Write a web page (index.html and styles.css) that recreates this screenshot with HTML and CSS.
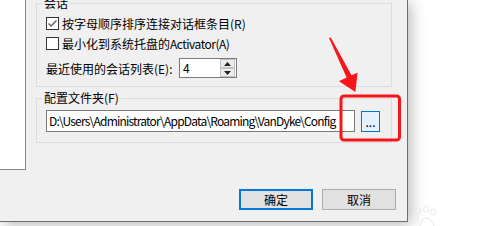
FILE: index.html
```html
<!DOCTYPE html>
<html lang="zh-CN">
<head>
<meta charset="utf-8">
<title>选项</title>
<link rel="stylesheet" href="styles.css">
</head>
<body>
<div class="screen">
  <div class="dialog">
    <div class="sidebar"></div>
    <div class="main">
      <div class="group g1">
        <div class="legend">会话</div>
        <div class="check-row">
          <span class="box"><svg width="11" height="11" viewBox="0 0 11 11"><polyline points="1.5,5.5 4,8 9.5,2.5" fill="none" stroke="#5c5c5c" stroke-width="1.3"/></svg></span>
          <span>按字母顺序排序连接对话框条目(R)</span>
        </div>
        <div class="check-row">
          <span class="box"></span>
          <span>最小化到系统托盘的<span class="latin">Activator(A)</span></span>
        </div>
        <div class="spin-row">
          <span class="spin-label">最近使用的会话列表(E):</span>
          <div class="spin">
            <span class="spin-value">4</span>
            <div class="spin-btns">
              <span class="spin-btn"><svg width="7" height="4" viewBox="0 0 7 4"><polygon points="0,4 7,4 3.5,0" fill="#222"/></svg></span>
              <span class="spin-btn"><svg width="7" height="4" viewBox="0 0 7 4"><polygon points="0,0 7,0 3.5,4" fill="#222"/></svg></span>
            </div>
          </div>
        </div>
      </div>
      <div class="group g2">
        <div class="legend">配置文件夹(F)</div>
        <div class="path-row">
          <div class="path-input">D:\Users\Administrator\AppData\Roaming\VanDyke\Config</div>
          <div class="browse">...</div>
        </div>
      </div>
      <div class="actions">
        <div class="btn btn-default">确定</div>
        <div class="btn">取消</div>
      </div>
    </div>
  </div>
  <svg class="overlay" width="500" height="226" viewBox="0 0 500 226">
    <rect x="341" y="96" width="58.5" height="44" rx="3" fill="none" stroke="#f5151b" stroke-width="3"/>
    <polygon points="329,38 330.8,37.6 351.5,75.3 357.5,72.8 355.4,92 339,81.2 346.6,77.6" fill="#f5151b"/>
    <g class="paw" fill="none" stroke="#ececec" stroke-width="1.2">
      <ellipse cx="418" cy="211" rx="2.5" ry="3"/>
      <ellipse cx="426" cy="209" rx="2.5" ry="3"/>
      <ellipse cx="433" cy="212" rx="2.5" ry="3"/>
      <ellipse cx="416" cy="219" rx="2.5" ry="3"/>
      <path d="M420,226 q2,-8 6,-8 q5,0 8,8"/>
    </g>
  </svg>
</div>
</body>
</html>
```

FILE: styles.css
```css
* {
  box-sizing: border-box;
}

body {
  margin: 0;
  background: #ffffff;
  color: #000000;
  font-family: "Noto Sans CJK SC", sans-serif;
  font-size: 12px;
}

.screen {
  position: relative;
  width: 500px;
  height: 226px;
  overflow: hidden;
}

.dialog {
  display: flex;
  width: 408px;
  height: 222px;
  background: #f0f0f0;
  border-right: 1px solid #6e6e6e;
  border-bottom: 1px solid #6e6e6e;
  box-shadow: 3px 3px 14px rgba(0, 0, 0, 0.28);
}

.sidebar {
  flex: none;
  width: 26px;
  height: 170px;
  background: #ffffff;
  border-right: 1px solid #828790;
  border-bottom: 1px solid #828790;
}

.main {
  display: flex;
  flex-direction: column;
  padding: 3px 0 0 10px;
}

.group {
  display: flex;
  flex-direction: column;
  width: 356px;
  border: 1px solid #dcdcdc;
  padding-left: 9px;
}

.g1 {
  height: 84px;
}

.g2 {
  height: 45px;
  margin-top: 11px;
}

.legend {
  align-self: flex-start;
  height: 14px;
  line-height: 14px;
  margin: -8px 0 3px -4px;
  padding: 0 2px;
  background: #f0f0f0;
  white-space: nowrap;
}

.check-row {
  display: flex;
  align-items: center;
  gap: 3px;
  height: 20px;
  white-space: nowrap;
}

.latin {
  letter-spacing: -0.5px;
}

.box {
  display: flex;
  flex: none;
  width: 13px;
  height: 13px;
  border: 1px solid #333333;
  background: #ffffff;
}

.spin-row {
  display: flex;
  align-items: center;
  height: 20px;
  margin-top: 5px;
  white-space: nowrap;
}

.spin-label {
  width: 133px;
}

.spin {
  display: flex;
  width: 58px;
  height: 20px;
  border: 1px solid #7a7a7a;
  background: #ffffff;
}

.spin-value {
  flex: 1;
  padding-left: 3px;
  line-height: 18px;
}

.spin-btns {
  display: flex;
  flex-direction: column;
  width: 16px;
  padding: 0 1px 0 0;
}

.spin-btn {
  display: flex;
  flex: 1;
  align-items: center;
  justify-content: center;
  background: #ececec;
  border: 1px solid #c2c2c2;
}

.path-row {
  display: flex;
  align-items: flex-start;
  gap: 6px;
  margin-top: 2px;
}

.path-input {
  width: 309px;
  height: 22px;
  padding-left: 2px;
  border: 1px solid #7a7a7a;
  background: #ffffff;
  line-height: 20px;
  letter-spacing: -0.8px;
  white-space: nowrap;
  overflow: hidden;
}

.browse {
  width: 19px;
  height: 21px;
  margin-top: 1px;
  border: 1px solid #0078d7;
  background: #e5f1fb;
  text-align: center;
  line-height: 19px;
}

.actions {
  display: flex;
  justify-content: flex-end;
  gap: 9px;
  width: 360px;
  margin-top: 46px;
}

.btn {
  display: flex;
  align-items: center;
  justify-content: center;
  width: 74px;
  height: 21px;
  border: 1px solid #adadad;
  background: #e1e1e1;
}

.btn-default {
  border: 2px solid #0078d7;
}

.overlay {
  position: absolute;
  top: 0;
  left: 0;
  pointer-events: none;
}
```
